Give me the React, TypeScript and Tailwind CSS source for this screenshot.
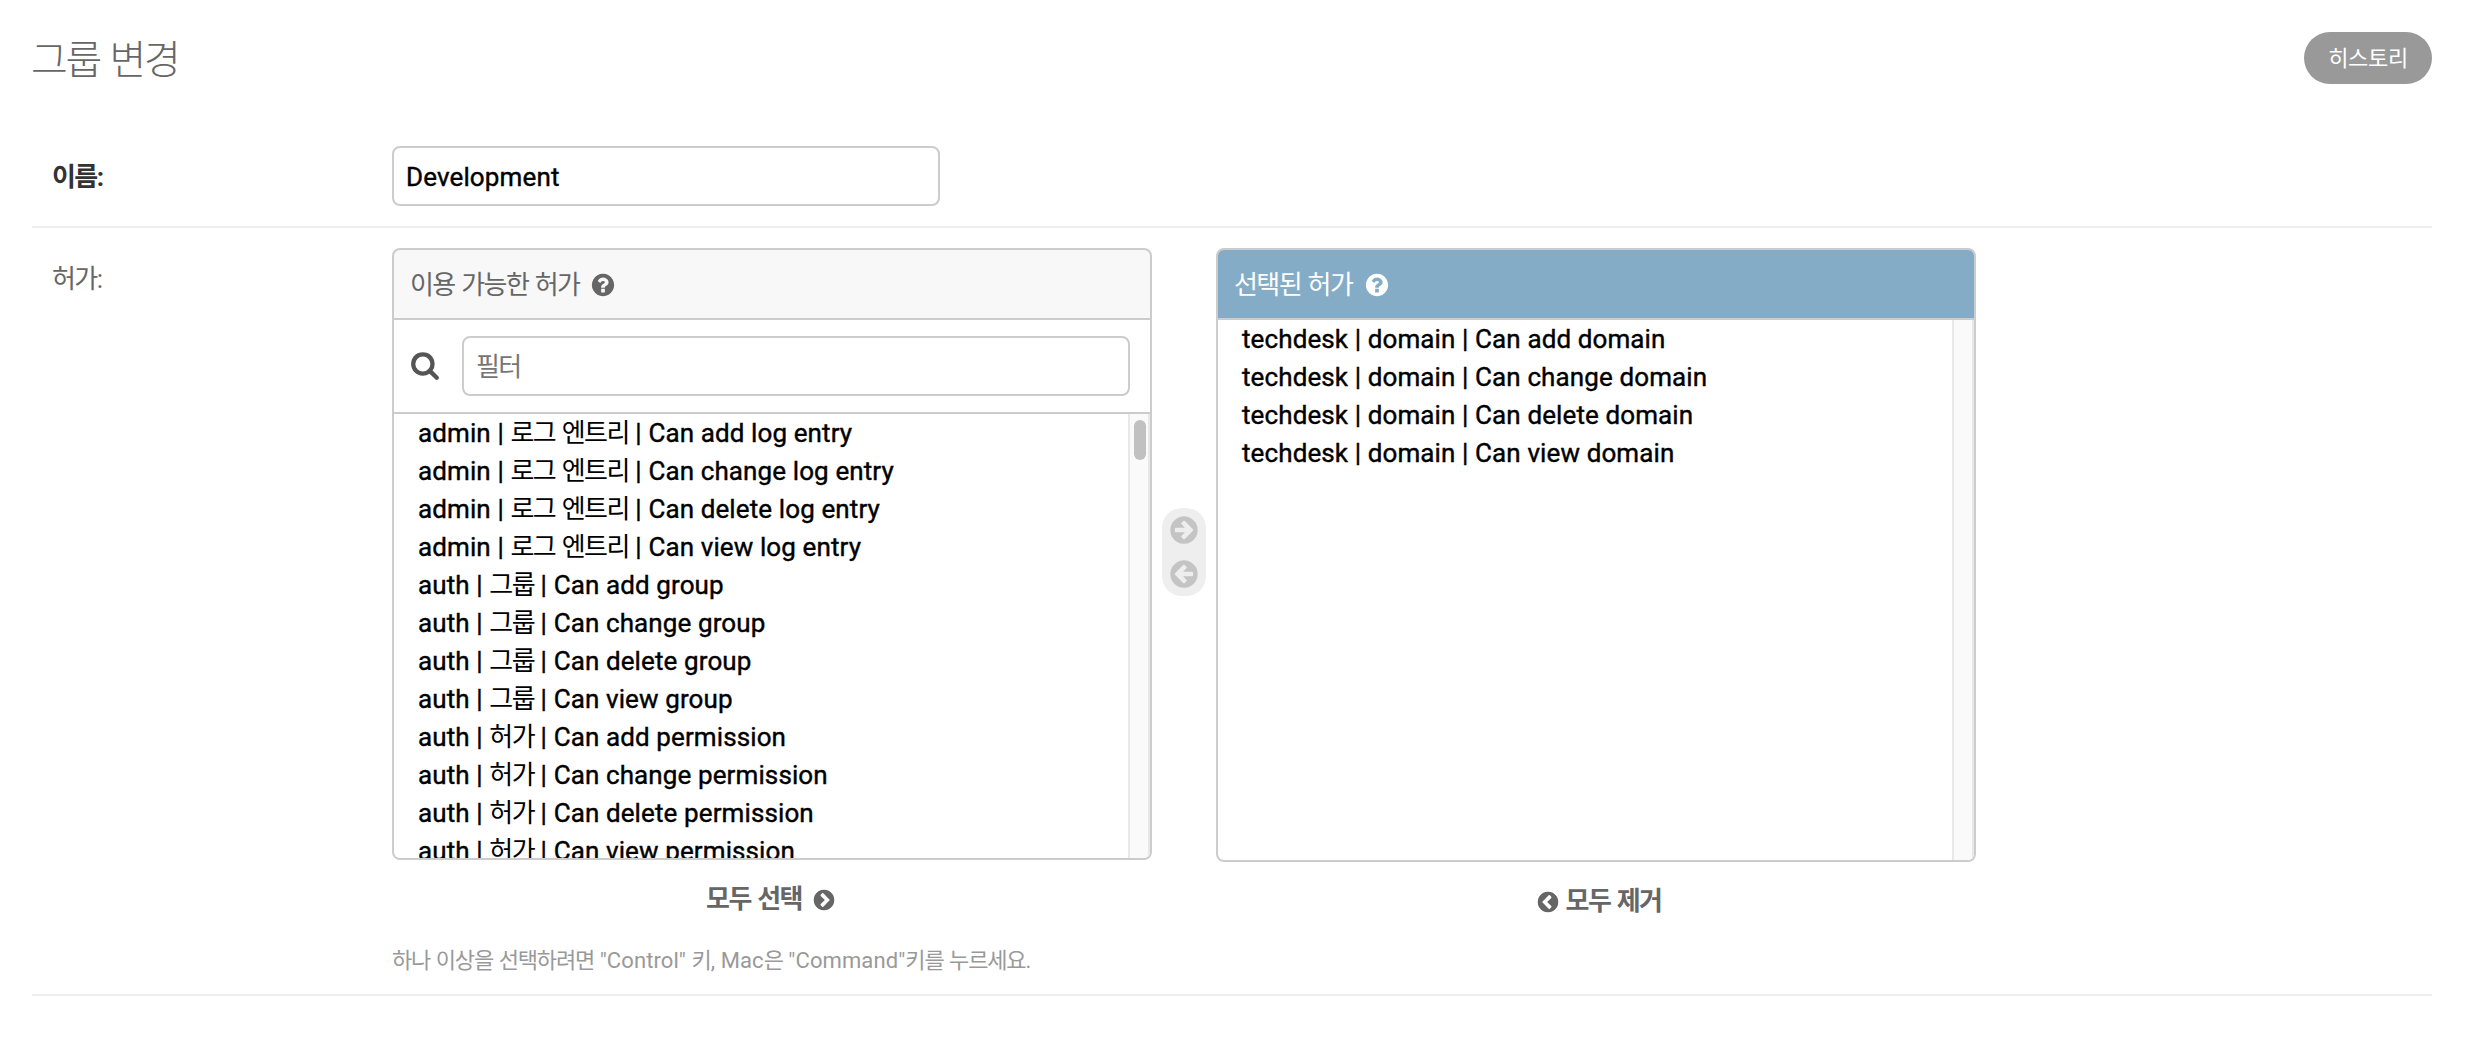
import React from 'react';

const RING =
  'q0 209-103 385.5t-279.500 279.500-385.500 103-385.500-103-279.500-279.500-103-385.500 103-385.500 279.500-279.500 385.500-103 385.500 103 279.500 279.500 103 385.500z';
const QUESTION =
  'M1024 1376v-192q0-14-9-23t-23-9h-192q-14 0-23 9t-9 23v192q0 14 9 23t23 9h192q14 0 23-9t9-23zm256-672q0-88-55.500-163t-138.500-116-170-41q-243 0-371 213-15 24 8 42l132 100q7 6 19 6 16 0 25-12 53-68 86-92 34-24 86-24 48 0 85.500 26t37.500 59q0 38-20 61t-68 45q-63 28-115.500 86.500t-52.500 125.500v36q0 14 9 23t23 9h192q14 0 23-9t9-23q0-19 21.500-49.500t54.500-49.500q32-18 49-28.500t46-35 44.500-48 28-60.500 12.500-81zm384 192' +
  RING;
const CHEVRON =
  'M845 1395l454-454q19-19 19-45t-19-45l-454-454q-19-19-45-19t-45 19l-102 102q-19 19-19 45t19 45l307 307-307 307q-19 19-19 45t19 45l102 102q19 19 45 19t45-19zm819-499' +
  RING;
const ARROW =
  'M1413 896q0-27-18-45l-91-91-362-362q-18-18-45-18t-45 18l-91 91q-18 18-18 45t18 45l189 189h-502q-26 0-45 19t-19 45v128q0 26 19 45t45 19h502l-189 189q-19 19-19 45t19 45l91 91q18 18 45 18t45-18l362-362 91-91q18-18 18-45zm251 0' +
  RING;
const SEARCH =
  'M1216 832q0-185-131.500-316.500t-316.500-131.500-316.500 131.500-131.500 316.500 131.500 316.500 316.500 131.500 316.500-131.500 131.500-316.500zm512 832q0 52-38 90t-90 38q-54 0-90-38l-343-342q-179 124-399 124-143 0-273.500-55.500t-225-150-150-225-55.500-273.500 55.500-273.500 150-225 225-150 273.500-55.500 273.500 55.500 225 150 150 225 55.500 273.500q0 220-124 399l343 343q37 37 37 90z';

function Icon({ d, className }: { d: string; className: string }) {
  return (
    <svg viewBox="0 0 1792 1792" fill="currentColor" className={'shrink-0 ' + className}>
      <path d={d} />
    </svg>
  );
}

/* Tightens the Hangul runs of a mixed Korean/Latin text. */
function T({ children, hangul = 'tracking-[-0.06em]' }: { children: string; hangul?: string }) {
  return (
    <>
      {children.split(/([\uac00-\ud7a3]+)/).map((part, i) =>
        i % 2 ? (
          <span key={i} className={hangul}>
            {part}
          </span>
        ) : (
          part
        ),
      )}
    </>
  );
}

const AVAILABLE = [
  ...['add', 'change', 'delete', 'view'].map((a) => `admin | 로그 엔트리 | Can ${a} log entry`),
  ...['add', 'change', 'delete', 'view'].map((a) => `auth | 그룹 | Can ${a} group`),
  ...['add', 'change', 'delete', 'view'].map((a) => `auth | 허가 | Can ${a} permission`),
];
const CHOSEN = ['add', 'change', 'delete', 'view'].map((a) => `techdesk | domain | Can ${a} domain`);

function OptionList({ items, thumb, className }: { items: string[]; thumb?: boolean; className: string }) {
  return (
    <div className={'flex overflow-hidden rounded-b-lg border-2 border-t-0 border-[#ccc] bg-white ' + className}>
      <ul className="min-w-0 flex-1 pl-6 tracking-[0.11px] text-black [-webkit-text-stroke:0.4px_black]">
        {items.map((item) => (
          <li key={item} className="h-[38px] whitespace-nowrap leading-[38px]">
            <T hangul="tracking-[-0.06em] [-webkit-text-stroke:0]">{item}</T>
          </li>
        ))}
      </ul>
      <div className="w-[22px] shrink-0 border-x-2 border-[#e8e8e8] bg-[#fafafa] pl-1 pt-1.5">
        {thumb && <div className="h-10 w-3 rounded-full bg-[#c1c1c1]" />}
      </div>
    </div>
  );
}

export default function App() {
  return (
    <div className="h-[1038px] w-[2470px] overflow-hidden bg-white px-8 pt-8 font-['Roboto','Noto_Sans_CJK_KR',sans-serif] text-[26px] leading-[38px] text-[#666]">
      <div className="mr-1.5 flex h-[98px] items-start justify-between">
        <h1 className="-ml-px mt-1.5 text-[40px] font-light leading-[46px]">
          <T>그룹 변경</T>
        </h1>
        <button className="h-[52px] w-32 rounded-full bg-[#999] text-[22px] leading-[54px] tracking-[-0.32px] text-white">
          히스토리
        </button>
      </div>

      <div className="mr-1.5 flex h-[98px] border-b-2 border-[#eee] pt-4">
        <label className="w-[360px] shrink-0 pl-5 pt-3 font-bold text-[#333]">
          <T>이름:</T>
        </label>
        <div className="h-[60px] w-[548px] rounded-lg border-2 border-[#ccc] px-3 leading-[58px] tracking-[0.13px] text-black [-webkit-text-stroke:0.4px_black]">
          Development
        </div>
      </div>

      <div className="mr-1.5 flex h-[768px] border-b-2 border-[#eee] pt-5">
        <label className="w-[360px] shrink-0 pl-5 pt-3">
          <T>허가:</T>
        </label>
        <div>
          <div className="flex">
            <section className="w-[760px]">
              <h2 className="flex h-[72px] items-center gap-[11px] rounded-t-lg border-2 border-[#ccc] bg-[#f8f8f8] pl-4 pt-0.5">
                <span>
                  <T>이용 가능한 허가</T>
                </span>
                <Icon d={QUESTION} className="size-[26px]" />
              </h2>
              <div className="flex h-[94px] border-x-2 border-b-2 border-[#ccc] pl-4 pt-4">
                <Icon d={SEARCH} className="mt-[14px] size-[30px] text-[#555]" />
                <div className="ml-[22px] h-[60px] w-[668px] rounded-lg border-2 border-[#ccc] px-3 leading-[58px] text-[#757575]">
                  <T>필터</T>
                </div>
              </div>
              <OptionList items={AVAILABLE} thumb className="h-[446px]" />
              <div className="mt-[19px] flex h-10 items-center justify-center gap-2.5 pr-0.5 font-bold">
                <span>
                  <T>모두 선택</T>
                </span>
                <Icon d={CHEVRON} className="mt-0.5 size-6" />
              </div>
            </section>

            <div className="mx-2.5 mt-[260px] flex h-[88px] w-11 flex-col items-center justify-center gap-3 rounded-[20px] bg-[#eee] text-[#c4c4c4]">
              <Icon d={ARROW} className="size-8" />
              <Icon d={ARROW} className="size-8 rotate-180" />
            </div>

            <section className="w-[760px]">
              <h2 className="flex h-[72px] items-center gap-3 rounded-t-lg border-2 border-[#ccc] bg-[#85acc6] pl-4 pt-0.5 text-white">
                <span>
                  <T>선택된 허가</T>
                </span>
                <Icon d={QUESTION} className="size-[26px]" />
              </h2>
              <OptionList items={CHOSEN} className="h-[542px]" />
              <div className="mt-[19px] flex h-10 items-center justify-center gap-1.5 pl-[5px] font-bold">
                <Icon d={CHEVRON} className="mt-0.5 size-6 rotate-180" />
                <span>
                  <T>모두 제거</T>
                </span>
              </div>
            </section>
          </div>
          <p className="mt-[22px] text-[22px] leading-[36px] tracking-[0.1px] text-[#999]">
            <T hangul="tracking-[-0.052em]">하나 이상을 선택하려면 "Control" 키, Mac은 "Command"키를 누르세요.</T>
          </p>
        </div>
      </div>
    </div>
  );
}
